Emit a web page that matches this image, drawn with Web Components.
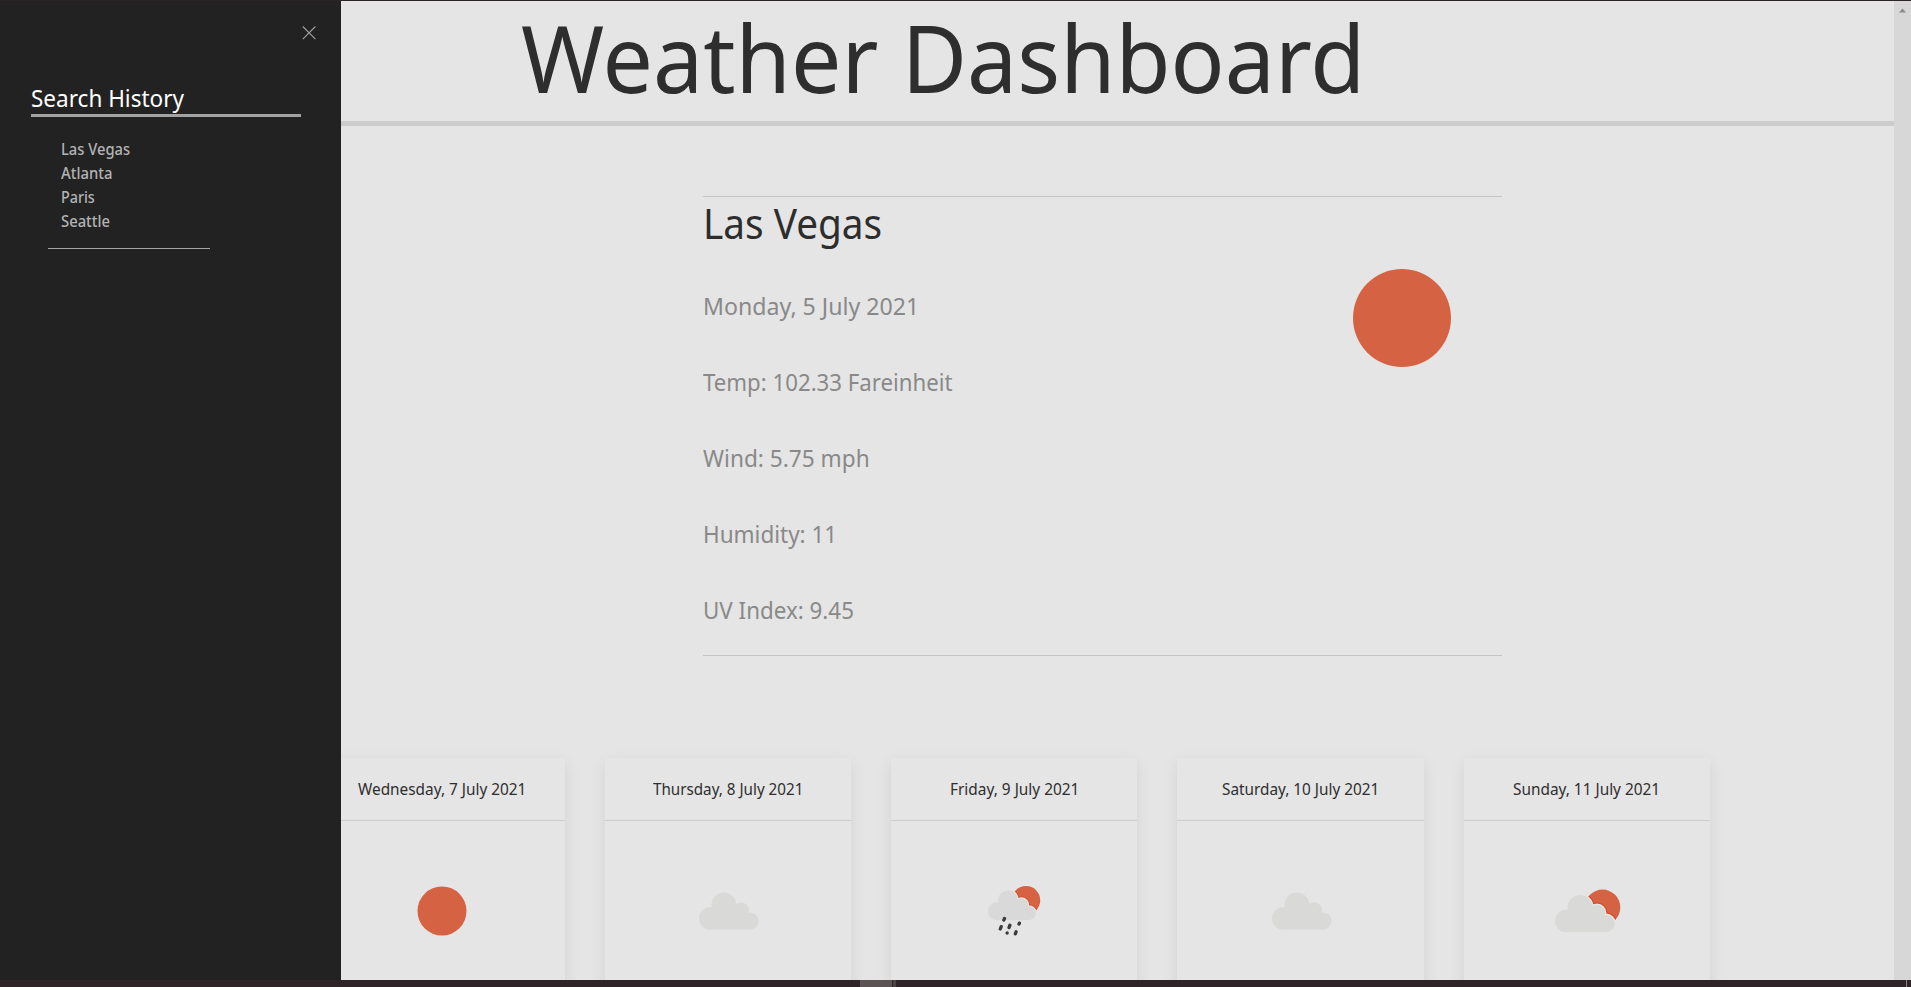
<!DOCTYPE html>
<html lang="en">
<head>
<meta charset="utf-8">
<title>Weather Dashboard</title>
<style>
html,body{margin:0;height:100%;overflow:hidden;background:#e5e5e5}
body{font-family:"Noto Sans","Open Sans",sans-serif;font-size:16px}
</style>
</head>
<body>
<weather-app></weather-app>
<script>
const define = (name, html, ready) => customElements.define(name, class extends HTMLElement {
  connectedCallback() {
    if (this.shadowRoot) return;
    const t = document.createElement('template');
    t.innerHTML = typeof html === 'function' ? html(this) : html;
    this.attachShadow({mode: 'open'}).appendChild(t.content.cloneNode(true));
    if (ready) ready(this);
  }
});

/* A line of text condensed or widened to an exact advance width. */
define('fit-text', el => `<style>
:host{display:block;width:${el.getAttribute('w')}px;white-space:nowrap}
span{display:inline-block;transform-origin:0 50%}
</style><span><slot></slot></span>`, el => {
  const s = el.shadowRoot.querySelector('span');
  s.style.transform = `scaleX(${el.getAttribute('w') / s.offsetWidth})`;
});

const cloud = (extra = '') => `<g ${extra}><circle cx="24.9" cy="12.4" r="12.4"/><circle cx="11.2" cy="26" r="11.2"/><circle cx="42" cy="18" r="8"/><circle cx="51" cy="28.5" r="8.6"/><path d="M11.2 16H30L42 20L51 25V37.1H11.2Z"/></g>`;
const cloudSun = id => `<clipPath id="${id}"><circle cx="47.5" cy="12.4" r="17.8"/></clipPath>
<circle cx="47.5" cy="12.4" r="17.8" fill="#d56343"/>
<g clip-path="url(#${id})">${cloud('fill="#d2482b" stroke="#d2482b" stroke-width="5"')}</g>
${cloud('fill="#e5e5e5" stroke="#e5e5e5" stroke-width="2.8"')}`;
const icons = {
  sun: '<circle cx="50" cy="50" r="24.5" fill="#d56343"/>',
  cloud: `<g transform="translate(21 31.5)">${cloud('fill="#d9d9d8"')}</g>`,
  partly: `<g transform="translate(18 34)">${cloudSun('p')}${cloud('fill="#d9d9d8"')}</g>`,
  rain: `<g transform="translate(24 29.4) scale(.8)">${cloudSun('r')}${cloud('fill="#d9d9d9"')}</g>
<g stroke="#3b3b3b" stroke-width="3.3" stroke-linecap="round"><path d="M39.8 59.1l.7-1.6M36.3 68l.9-2.4M45 66.6l.9-2.4M55 63l.4-.9M43.1 72h.1M51.3 72.9l.8-2.1"/></g>`
};
define('weather-icon', el => `<style>:host{display:block;width:var(--size,100px);height:var(--size,100px)}svg{display:block;width:100%;height:100%}</style>
<svg viewBox="0 0 100 100">${icons[el.getAttribute('name')]}</svg>`);

define('side-panel', `<style>
:host{display:block;box-sizing:border-box;width:341px;flex:none;background:#222;color:#fff;padding:25px 25px 0 31px}
svg{display:block;margin-left:auto;width:14px;height:14px}
h3{margin:41px 15px 0 0;font:400 24px/33px "Noto Sans",sans-serif;height:33px;border-bottom:3px solid #a2a2a2}
.list{padding:20px 0 0 30px;line-height:24px;color:#b3b3b3;font-weight:500}
hr{margin:15px 0 0 17px;width:162px;border:0;height:1px;background:#a5a5a5}
</style>
<svg viewBox="0 0 14 14" stroke="#a0a0a0" stroke-width="1.1"><path d="M.8.5l12.6 12.6M13.4.5L.8 13.1"/></svg>
<h3><fit-text w="153">Search History</fit-text></h3>
<div class="list"><slot></slot></div><hr>`);

define('page-header', `<style>
:host{display:block;height:120px;border-bottom:5px solid #ccc;color:#2e2e2e;font-size:94px;line-height:112px}
fit-text{margin-left:180px}
</style><fit-text w="844"><slot></slot></fit-text>`);

define('current-weather', `<style>
:host{display:block;box-sizing:border-box;width:799px;height:460px;margin:70px 0 0 362px;border:solid #c4c4c4;border-width:1px 0}
.row{display:flex;justify-content:space-between}
.sun{--size:200px;margin:20.6px -.4px 0 0}
.body{color:#898989;font-size:24px;line-height:36px}
.facts{display:flex;flex-direction:column;gap:40px;padding-top:39px}
.name{color:#2d2d2d;font-size:42px;line-height:52px}
</style>
<div class="row"><div class="body"><div class="name"><slot name="city"></slot></div><div class="facts"><slot></slot></div></div>
<weather-icon class="sun" name="sun"></weather-icon></div>`);

define('day-card', el => `<style>
:host{display:block;flex:none;box-sizing:border-box;width:246.4px;height:340px;background:#e5e5e5;box-shadow:0 5px 15px rgba(0,0,0,.08);color:#2e2e2e}
.top{display:flex;justify-content:center;height:62px;line-height:62px;border-bottom:1px solid #ccc}
.body{display:flex;justify-content:center;padding-top:40.3px}
</style><div class="top"><fit-text w="${el.getAttribute('w')}"><slot></slot></fit-text></div>
<div class="body"><weather-icon name="${el.getAttribute('icon')}"></weather-icon></div>`);

define('scroll-track', `<style>:host{display:flex;flex:none;width:17px;background:#d7d7d7;justify-content:center}svg{width:9px;height:5px;margin-top:7px}</style>
<svg viewBox="0 0 9 5" fill="#8b8b8b"><path d="M1 4.5L4.5.5L8 4.5Z"/></svg>`);

define('task-strip', `<style>:host{display:flex;height:7px;background:#2f2528}
i{display:block;height:7px}.a{margin-left:860px;width:32px;background:#5c5355}.b{width:1px;background:#2f2528}.c{width:3px;background:#4b4446}.d{margin:0 4px 0 auto;width:1px;background:#8a8486}</style>
<i class="a"></i><i class="b"></i><i class="c"></i><i class="d"></i>`);

define('weather-app', `<style>
:host{display:grid;grid-template-rows:1px 979px 7px;width:1911px;height:987px;overflow:hidden;background:#e5e5e5}
.edge{background:#2a2327}
.mid{display:flex;min-height:0}
side-panel,scroll-track,task-strip{position:relative;z-index:1}
main{flex:1;min-width:0}
.days{display:flex;gap:39.9px;margin:102px 0 0 -22.5px}
</style>
<div class="edge"></div>
<div class="mid">
<side-panel><fit-text w="69">Las Vegas</fit-text><fit-text w="51">Atlanta</fit-text><fit-text w="34">Paris</fit-text><fit-text w="49">Seattle</fit-text></side-panel>
<main>
<page-header>Weather Dashboard</page-header>
<current-weather><fit-text slot="city" w="179">Las Vegas</fit-text>
<fit-text w="216">Monday, 5 July 2021</fit-text><fit-text w="250">Temp: 102.33 Fareinheit</fit-text><fit-text w="167">Wind: 5.75 mph</fit-text><fit-text w="134">Humidity: 11</fit-text><fit-text w="151">UV Index: 9.45</fit-text></current-weather>
<div class="days">
<day-card w="168" icon="sun">Wednesday, 7 July 2021</day-card>
<day-card w="150" icon="cloud">Thursday, 8 July 2021</day-card>
<day-card w="129" icon="rain">Friday, 9 July 2021</day-card>
<day-card w="157" icon="cloud">Saturday, 10 July 2021</day-card>
<day-card w="147" icon="partly">Sunday, 11 July 2021</day-card>
</div>
</main>
<scroll-track></scroll-track>
</div>
<task-strip></task-strip>`);
</script>
</body>
</html>
